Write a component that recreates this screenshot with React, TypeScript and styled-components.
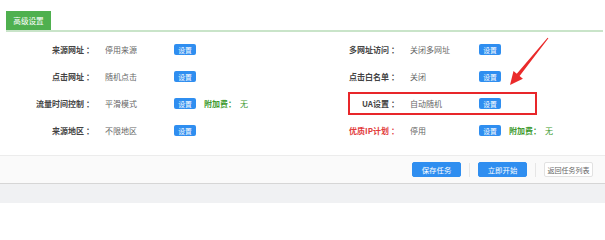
import * as React from 'react';
import styled, { createGlobalStyle } from 'styled-components';

const GlobalStyle = createGlobalStyle`
  html, body {
    margin: 0;
    padding: 0;
    background: #fff;
  }
  body {
    font-family: "Noto Sans CJK SC", "Noto Sans", sans-serif;
    font-size: 8px;
  }
`;

const Page = styled.div`
  width: 605px;
  height: 203px;
  background: #f0f1f3;
  display: flex;
  flex-direction: column;
`;

const Panel = styled.div`
  background: #fff;
  padding-top: 11px;
`;

const Header = styled.div`
  margin: 0 2px 0 6px;
  border-bottom: 2px solid #c9e4c9;
  display: flex;
`;

const HeaderTab = styled.div`
  height: 19px;
  width: 45px;
  background: #4fb04f;
  color: #fff;
  display: flex;
  align-items: center;
  justify-content: center;
  font-size: 7.6px;
`;

const Body = styled.div`
  position: relative;
  padding: 4px 0 11px;
`;

const Row = styled.div`
  display: grid;
  grid-template-columns: 305px 1fr;
  height: 27px;
`;

const Cell = styled.div`
  display: flex;
  align-items: center;
`;

const Label = styled.div<{ $red?: boolean }>`
  width: 94px;
  text-align: right;
  font-weight: bold;
  color: ${(p) => (p.$red ? '#e23b3b' : '#444')};
  white-space: nowrap;
`;

const Colon = styled.span`
  margin-left: 2px;
`;

const Value = styled.div`
  width: 69px;
  margin-left: 11px;
  color: #666;
  white-space: nowrap;
`;

const SmallButton = styled.div`
  width: 22px;
  height: 11px;
  border-radius: 2px;
  background: #2f8ef0;
  color: #fff;
  font-size: 6.8px;
  display: flex;
  align-items: center;
  justify-content: center;
`;

const Extra = styled.div`
  margin-left: 8px;
  display: flex;
  color: #3e9a2e;
`;

const ExtraLabel = styled.span`
  font-weight: bold;
  margin-right: 4px;
`;

const HighlightBox = styled.div`
  position: absolute;
  left: 348px;
  top: 60px;
  width: 185px;
  height: 19px;
  border: 2px solid #e8262a;
`;

const Arrow = styled.svg`
  position: absolute;
  left: 500px;
  top: 0;
`;

const Footer = styled.div`
  height: 27px;
  border-top: 1px solid #ececec;
  border-bottom: 1px solid #d6d6d6;
  background: #fafafa;
  display: flex;
  align-items: center;
  justify-content: flex-end;
  gap: 8px;
  padding-right: 12px;
`;

const FooterButton = styled.div<{ $plain?: boolean }>`
  width: 49px;
  height: 15px;
  box-sizing: border-box;
  border-radius: 2px;
  display: flex;
  align-items: center;
  justify-content: center;
  white-space: nowrap;
  background: ${(p) => (p.$plain ? '#fff' : '#2f8ef0')};
  color: ${(p) => (p.$plain ? '#666' : '#fff')};
  border: 1px solid ${(p) => (p.$plain ? '#e2e2e2' : '#2f8ef0')};
  font-size: ${(p) => (p.$plain ? '7px' : '7.4px')};
`;

const Divider = styled.div`
  width: 1px;
  height: 14px;
  background: #e6e6e6;
`;

type Item = {
  label: string;
  value: string;
  red?: boolean;
  fee?: boolean;
};

const rows: [Item, Item][] = [
  [
    { label: '来源网址', value: '停用来源' },
    { label: '多网址访问', value: '关闭多网址' },
  ],
  [
    { label: '点击网址', value: '随机点击' },
    { label: '点击白名单', value: '关闭' },
  ],
  [
    { label: '流量时间控制', value: '平滑模式', fee: true },
    { label: 'UA设置', value: '自动随机' },
  ],
  [
    { label: '来源地区', value: '不限地区' },
    { label: '优质IP计划', value: '停用', red: true, fee: true },
  ],
];

const Setting = ({ item }: { item: Item }) => (
  <Cell>
    <Label $red={item.red}>
      {item.label}
      <Colon>：</Colon>
    </Label>
    <Value>{item.value}</Value>
    <SmallButton>设置</SmallButton>
    {item.fee && (
      <Extra>
        <ExtraLabel>附加费：</ExtraLabel>
        <span>无</span>
      </Extra>
    )}
  </Cell>
);

const App = () => (
  <>
    <GlobalStyle />
    <Page>
      <Panel>
        <Header>
          <HeaderTab>高级设置</HeaderTab>
        </Header>
        <Body>
          {rows.map(([left, right], i) => (
            <Row key={i}>
              <Setting item={left} />
              <Setting item={right} />
            </Row>
          ))}
          <HighlightBox />
          <Arrow width="55" height="60" viewBox="0 0 55 60">
            <polygon
              points="48.4,6.3 19.6,44 22.9,46.7 10,53 13.5,39.1 16.8,41.8 47.6,5.7"
              fill="#ea2a2a"
            />
          </Arrow>
        </Body>
        <Footer>
          <FooterButton>保存任务</FooterButton>
          <Divider />
          <FooterButton>立即开始</FooterButton>
          <Divider />
          <FooterButton $plain>返回任务列表</FooterButton>
        </Footer>
      </Panel>
    </Page>
  </>
);

export default App;
